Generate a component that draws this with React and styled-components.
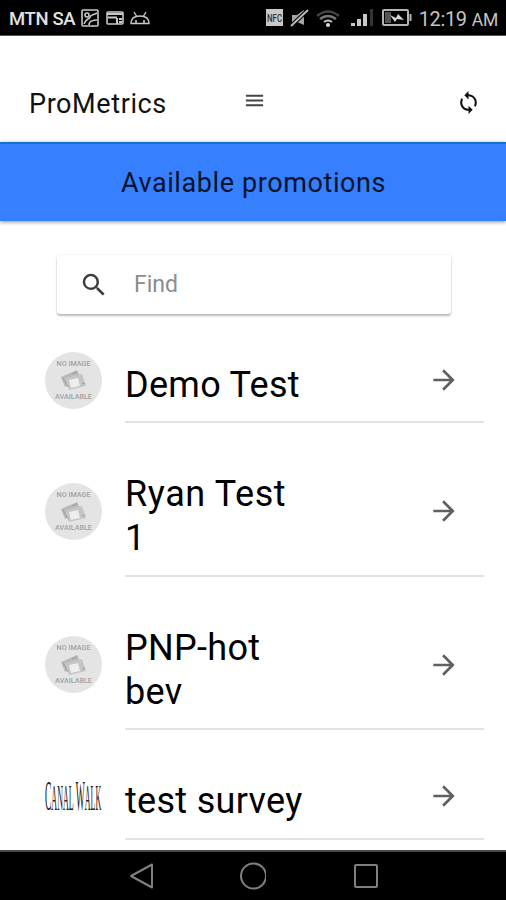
import React, { useState } from "react";
import styled, { createGlobalStyle } from "styled-components";
import { MdArrowForward, MdLoop, MdMenu, MdSearch } from "react-icons/md";

const GlobalStyle = createGlobalStyle`
  * {
    box-sizing: border-box;
  }

  body {
    margin: 0;
    background: #fff;
    font-family: Roboto, sans-serif;
    color: #000;
  }
`;

const Screen = styled.div`
  display: flex;
  flex-direction: column;
  width: 100%;
  height: 900px;
  overflow: hidden;
  background: #fff;
`;

const StatusBar = styled.div`
  display: flex;
  align-items: center;
  flex: none;
  height: 36px;
  padding: 2px 8px 0 9px;
  background: #000;
  border-bottom: 1px solid #555;
  color: #e2e2e2;
  white-space: nowrap;
`;

const Carrier = styled.span`
  width: 71px;
  font-size: 18.5px;
  font-weight: 500;
  letter-spacing: -0.35px;
`;

const StatusIcons = styled.svg`
  display: block;
  flex: none;
  margin-left: ${(props) => props.$left || "0"};
`;

const Clock = styled.span`
  margin-left: auto;
  font-size: 20px;
  letter-spacing: -0.35px;
  color: #c4c4c4;

  small {
    margin-left: 5px;
    font-size: 17.5px;
    letter-spacing: -0.2px;
  }
`;

const Header = styled.header`
  display: grid;
  grid-template-columns: 214px 213px 1fr;
  align-items: center;
  flex: none;
  height: 106px;
  padding: 29px 0 0 29px;
`;

const AppName = styled.h1`
  margin: 0;
  font-size: 27px;
  font-weight: 400;
  letter-spacing: 0.6px;
  line-height: 32px;
  color: #111;
`;

const IconButton = styled.button`
  display: flex;
  padding: 0;
  border: 0;
  background: none;
  color: ${(props) => props.$color || "#111"};
  font-size: ${(props) => props.$size || "25px"};
  margin-top: ${(props) => props.$top || "0"};
`;

const Banner = styled.div`
  display: flex;
  align-items: center;
  justify-content: center;
  flex: none;
  height: 79px;
  padding-left: 1px;
  border-top: 2px solid #176fd0;
  background: #367ffe;
  box-shadow: 0 1px 4px rgba(0, 0, 0, 0.45);
  font-size: 27px;
  letter-spacing: 0.6px;
  color: #08142c;
`;

const SearchBox = styled.label`
  display: flex;
  align-items: center;
  flex: none;
  width: 394px;
  height: 59px;
  margin: 34px 0 0 57px;
  padding-left: 22px;
  border-radius: 3px;
  box-shadow: 0 2px 2px rgba(0, 0, 0, 0.25), 0 0 2px rgba(0, 0, 0, 0.12);
  font-size: 30px;
  color: #3c3c3c;
`;

const SearchInput = styled.input`
  width: 280px;
  margin-left: 25px;
  padding: 0;
  border: 0;
  outline: none;
  background: none;
  font-family: inherit;
  font-size: 23px;

  &::placeholder {
    color: #8c8c8c;
    opacity: 1;
  }
`;

const PromotionList = styled.ul`
  flex: 1;
  min-height: 0;
  margin: 0;
  padding: 0;
  overflow: hidden;
  list-style: none;
`;

const PromotionRow = styled.li`
  display: flex;
  padding-left: 45px;
`;

const Thumb = styled.div`
  display: flex;
  align-items: center;
  width: 80px;
  padding-top: 23px;
`;

const Details = styled.div`
  display: flex;
  align-items: center;
  justify-content: space-between;
  width: 359px;
  padding: 44px 24px 19.4px 0;
  border-bottom: 2px solid #e2e2e2;
`;

const PromotionName = styled.h2`
  position: relative;
  top: 5px;
  width: 190px;
  margin: 0;
  font-size: 36px;
  font-weight: 400;
  letter-spacing: ${(props) => props.$spacing || "0.3px"};
  line-height: 44px;
`;

const NoImage = styled.div`
  display: flex;
  flex-direction: column;
  align-items: center;
  justify-content: space-between;
  flex: none;
  width: 57px;
  height: 57px;
  padding: 8px 0;
  border-radius: 50%;
  background: #e4e4e4;
  font-size: 7.2px;
  font-weight: 500;
  line-height: 8px;
  white-space: nowrap;
  color: #a2a2a2;
`;

const CanalWalk = styled.div`
  flex: none;
  width: 57px;
  height: 36px;
  font-family: "Liberation Serif", serif;
  font-size: 43px;
  line-height: 36px;
  white-space: nowrap;
  color: #222;

  span {
    display: inline-block;
    transform: scaleX(0.222);
    transform-origin: left center;
  }

  small {
    font-size: 36px;
  }
`;

const NavBar = styled.nav`
  display: flex;
  align-items: center;
  flex: none;
  height: 50px;
  padding: 0 0 0 128px;
  gap: 84px;
  border-top: 2px solid #4a4a4a;
  background: #000;

  svg {
    display: block;
    fill: none;
    stroke: #808080;
    stroke-width: 2;
    stroke-linejoin: round;
  }
`;

const promotions = [
  { id: 1, name: "Demo Test" },
  { id: 2, name: "Ryan Test 1", spacing: "0.6px" },
  { id: 3, name: "PNP-hot bev" },
  { id: 4, name: "test survey", logo: "canalwalk" },
];

function Placeholder() {
  return (
    <NoImage>
      <span>NO IMAGE</span>
      <svg width="28" height="22" viewBox="0 0 28 22">
        <path d="M1 8 L17 1 L21 9 L5 18 Z" fill="#b9b9b9" />
        <path d="M5 9 L22 5 L26 17 L9 21 Z" fill="#c5c5c5" />
        <path d="M9 11 L18 9 L20 17 L11 19 Z" fill="#eee" />
        <path d="M3 9 L8 18 M12 5 L17 3 M22 15 L25 14" stroke="#9d9d9d" />
      </svg>
      <span>AVAILABLE</span>
    </NoImage>
  );
}

function Logo() {
  return (
    <CanalWalk>
      <span>
        C<small>ANAL</small> W<small>ALK</small>
      </span>
    </CanalWalk>
  );
}

function PhoneStatus() {
  return (
    <StatusBar>
      <Carrier>MTN SA</Carrier>
      <StatusIcons width="72" height="20" fill="none" stroke="#c8c8c8" strokeWidth="1.6">
        <rect x="2" y="1" width="16" height="16" rx="1" />
        <circle cx="7" cy="6" r="2" />
        <path d="M4 15 C6 9 9 11 10 8 S14 6 17 4 M9 16 C9 12 14 11 17 11" />
        <rect x="27" y="3" width="16" height="12" rx="1" />
        <path d="M27 5 H43 M28 8.5 H37 M37 9 V15 M39 10 H42 M39 13 H42" strokeWidth="2" />
        <path d="M51 14.5 C51 10 54 7 60 7 S69 10 69 14.5 Z M54 3 L57 8 M66 3 L63 8" strokeWidth="1.4" />
        <path d="M56 11 V14 M64 11 V14" />
      </StatusIcons>
      <StatusIcons width="148" height="22" $left="112px">
        <rect x="2" y="1" width="17" height="17" fill="#c9c9c9" />
        <text x="3" y="14" fontSize="11" textLength="15" lengthAdjust="spacingAndGlyphs" fontWeight="500" fill="#333">
          NFC
        </text>
        <path d="M28 7 H33 L40 2 V17 L33 14 H28 Z" fill="#a5a5a5" />
        <path d="M27 18 L44 2" stroke="#000" strokeWidth="4" />
        <path d="M27 18 L44 2" stroke="#bcbcbc" strokeWidth="1.8" />
        <path d="M53 8 Q64 -1 75 8" fill="none" stroke="#444" strokeWidth="2.5" />
        <path d="M56 11 Q64 5 72 11" fill="none" stroke="#777" strokeWidth="2.5" />
        <path d="M60 14 Q64 11 68 14" fill="none" stroke="#c8c8c8" strokeWidth="2" />
        <circle cx="64" cy="17" r="2" fill="#ddd" />
        <path d="M87 15 H91 V18 H87 Z M93 11 H97 V18 H93 Z M99 6 H103 V18 H99 Z" fill="#c8c8c8" />
        <path d="M106 1 H109 V18 H106 Z" fill="#333" />
        <rect x="119" y="2" width="25" height="15" rx="1" fill="none" stroke="#b4b4b4" strokeWidth="2" />
        <path d="M121 4 H127 V15 H121 Z" fill="#555" />
        <path d="M146.5 6 V13" stroke="#b4b4b4" strokeWidth="2" />
        <path d="M126 7 L132 10 L134 6 L140 12 L133 11 L131 14 Z" fill="#d8d8d8" />
      </StatusIcons>
      <Clock>
        12:19<small>AM</small>
      </Clock>
    </StatusBar>
  );
}

export default function App() {
  const [query, setQuery] = useState("");

  const visible = promotions.filter((item) =>
    item.name.toLowerCase().includes(query.toLowerCase())
  );

  return (
    <Screen>
      <GlobalStyle />
      <PhoneStatus />
      <Header>
        <AppName>ProMetrics</AppName>
        <IconButton $top="-7px" $size="23px" $color="#444">
          <MdMenu />
        </IconButton>
        <IconButton $top="-2px" onClick={() => setQuery("")}>
          <MdLoop />
        </IconButton>
      </Header>
      <Banner>Available promotions</Banner>
      <SearchBox>
        <MdSearch />
        <SearchInput
          placeholder="Find"
          value={query}
          onChange={(e) => setQuery(e.target.value)}
        />
      </SearchBox>
      <PromotionList>
        {visible.map((item) => (
          <PromotionRow key={item.id}>
            <Thumb>{item.logo ? <Logo /> : <Placeholder />}</Thumb>
            <Details>
              <PromotionName $spacing={item.spacing}>{item.name}</PromotionName>
              <IconButton $size="32px" $color="#606060">
                <MdArrowForward />
              </IconButton>
            </Details>
          </PromotionRow>
        ))}
      </PromotionList>
      <NavBar>
        <svg width="26" height="28">
          <path d="M3 14 L24 2.5 V25.5 Z" />
        </svg>
        <svg width="28" height="28">
          <circle cx="15.5" cy="14" r="12.5" />
        </svg>
        <svg width="28" height="28">
          <rect x="5" y="3" width="22" height="22" rx="1" />
        </svg>
      </NavBar>
    </Screen>
  );
}
